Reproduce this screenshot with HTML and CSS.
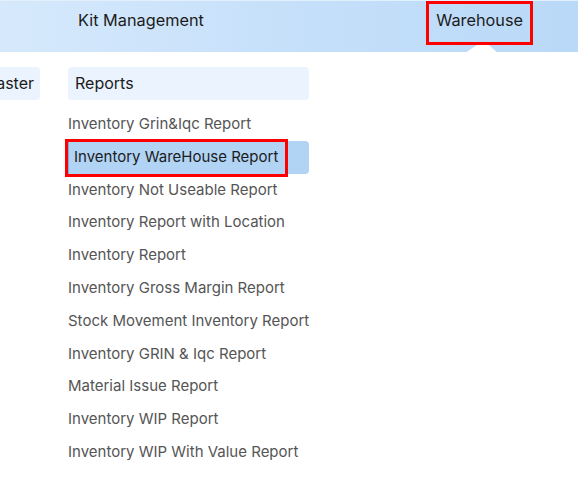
FILE: index.html
```html
<!DOCTYPE html>
<html>
<head>
<meta charset="utf-8">
<link rel="stylesheet" href="styles.css">
</head>
<body>
<header class="topbar">
  <nav class="nav">
    <a class="nav-item">Kit Management</a>
    <a class="nav-item nav-item--active">Warehouse<span class="notch"></span></a>
  </nav>
</header>
<section class="mega">
  <div class="col col--master">
    <div class="col-head">Master</div>
  </div>
  <div class="col col--reports">
    <div class="col-head">Reports</div>
    <ul class="links">
      <li class="link">Inventory Grin&amp;Iqc Report</li>
      <li class="link link--active">Inventory WareHouse Report<span class="mark"></span></li>
      <li class="link">Inventory Not Useable Report</li>
      <li class="link">Inventory Report with Location</li>
      <li class="link">Inventory Report</li>
      <li class="link">Inventory Gross Margin Report</li>
      <li class="link">Stock Movement Inventory Report</li>
      <li class="link">Inventory GRIN &amp; Iqc Report</li>
      <li class="link">Material Issue Report</li>
      <li class="link">Inventory WIP Report</li>
      <li class="link">Inventory WIP With Value Report</li>
    </ul>
  </div>
</section>
</body>
</html>
```
FILE: styles.css
```css
* { box-sizing: border-box; }
html, body { margin: 0; padding: 0; background: #ffffff; }
body {
  font-family: Inter, "Noto Sans", "Liberation Sans", sans-serif;
  width: 578px;
  height: 494px;
  overflow: hidden;
}
.topbar {
  height: 52px;
  padding-top: 1px;
  background: linear-gradient(90deg, #d6e9fc 0%, #c6e0fa 50%, #b9d9f8 100%);
  box-shadow: inset 0 1px 0 #e2effd;
}
.nav {
  display: flex;
  padding: 0 45px 0 69px;
}
.nav-item {
  position: relative;
  display: block;
  font-size: 16.3px;
  line-height: 32px;
  color: #1c1c1c;
  padding: 0 6px 6px;
  border: 3px solid transparent;
}
.nav-item--active {
  margin-left: auto;
  padding: 0 7px 6px 7px;
  border-color: #ff0000;
}
.notch {
  position: absolute;
  left: 50%;
  bottom: -10px;
  width: 30px;
  height: 7px;
  margin-left: -13px;
  background: #ffffff;
  clip-path: polygon(0 100%, 34% 0, 74% 0, 100% 100%);
}
.mega {
  display: flex;
  gap: 28px;
  margin-left: -28px;
  padding-top: 15px;
}
.col--master { width: 68px; }
.col--reports { width: 241px; }
.col-head {
  height: 33px;
  line-height: 33px;
  padding: 0 7px;
  font-size: 16px;
  color: #1c1c1c;
  background: #ebf4fe;
  border-radius: 4px;
  white-space: nowrap;
}
.col--master .col-head {
  text-align: right;
  padding: 0 6px 0 0;
}
.links {
  list-style: none;
  margin: 8px 0 0;
  padding: 0;
}
.link {
  position: relative;
  height: 32.8px;
  line-height: 32.8px;
  font-size: 15px;
  color: #555555;
  white-space: nowrap;
}
.link--active {
  padding-left: 5px;
  color: #1c1c1c;
  background: #b1d3f4;
  border-left: 1px solid #79aee6;
  border-radius: 0 4px 4px 0;
}
.mark {
  position: absolute;
  left: -4px;
  top: -2px;
  width: 223px;
  height: 38px;
  border: 3px solid #ff0000;
}
```
